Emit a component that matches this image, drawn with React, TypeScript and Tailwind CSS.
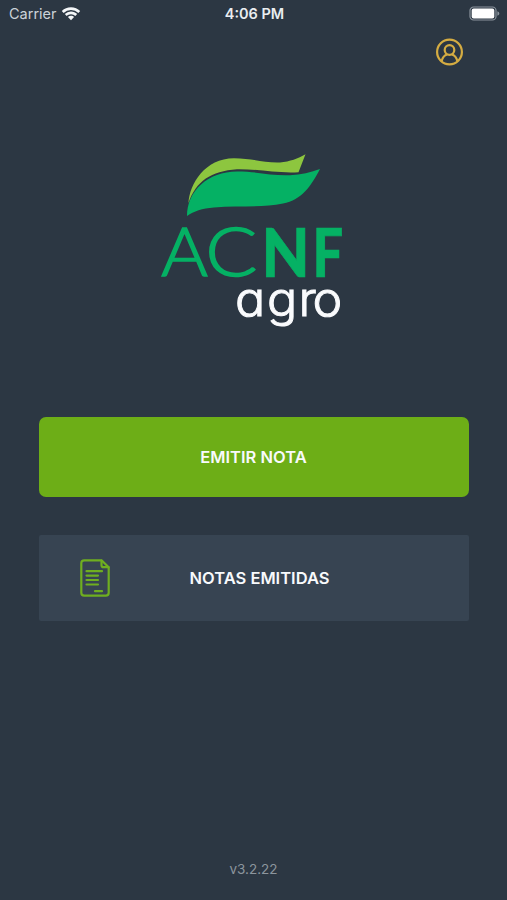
import type { ReactNode } from "react";

function WifiIcon() {
  return (
    <svg width="20" height="14" viewBox="0 0 20 14" className="ml-1 -mt-px" fill="#f4f6f8">
      <path d="M10 0.3c3.6 0 6.8 1.4 9.2 3.7l-1.8 1.9A10.6 10.6 0 0 0 10 2.9 10.6 10.6 0 0 0 2.6 5.9L0.8 4A13.2 13.2 0 0 1 10 0.3z" />
      <path d="M10 4.600c2.400 0 4.600.9 6.200 2.500l-1.900 1.900A6.200 6.200 0 0 0 10 7.200c-1.700 0-3.200.7-4.300 1.800L3.800 7.100A8.800 8.800 0 0 1 10 4.600z" />
      <path d="M10 8.800c1.200 0 2.300.5 3.100 1.300L10 13.300 6.900 10.100A4.400 4.400 0 0 1 10 8.800z" />
    </svg>
  );
}

function BatteryIcon() {
  return (
    <svg width="32" height="16" viewBox="0 0 32 16" className="-mt-px" fill="none">
      <rect x="2" y="1" width="26" height="13" rx="3.6" stroke="#8b949d" strokeWidth="1.2" />
      <rect x="3.700" y="2.600" width="22.600" height="9.800" rx="2" fill="#ffffff" />
      <path d="M29.400 5.200c1.400.5 1.900 1.400 1.900 2.300s-.5 1.800-1.900 2.300z" fill="#8b949d" />
    </svg>
  );
}

function ProfileIcon() {
  return (
    <svg width="28" height="28" viewBox="0 0 28 28" fill="none" stroke="#d5ac42" strokeWidth="2.200">
      <circle cx="13.500" cy="14" r="12.400" />
      <circle cx="13.500" cy="12" r="4.800" />
      <path d="M5.700 23c.7-3.500 2.600-5.600 5.400-6.500M21.300 23c-.7-3.500-2.600-5.600-5.400-6.500" />
    </svg>
  );
}

function NoteIcon() {
  return (
    <svg
      width="30"
      height="38"
      viewBox="0 0 30 38"
      fill="none"
      stroke="#6fae20"
      strokeWidth="2.200"
      strokeLinecap="round"
      strokeLinejoin="round"
    >
      <path d="M21.500 1.300H4.200A2.900 2.900 0 0 0 1.300 4.200v29.600a2.900 2.900 0 0 0 2.900 2.900h21.600a2.900 2.900 0 0 0 2.900-2.900V8.300z" />
      <path d="M21.500 1.500v4.700a2 2 0 0 0 2 2h5" />
      <path d="M6.500 12.200h15.500M6.500 16.600h11.500M6.500 21h11.500M6.500 25.500h11.500M15 32.200h7" />
    </svg>
  );
}

function Logo() {
  return (
    <svg width="200" height="190" viewBox="150 145 200 190">
      <path
        d="M188.500 203C189.500 184 205 158.200 234 158.200C252 158.200 264 163 280 162.400C290 161.500 298 158.500 305.500 154.200L298.500 172.200C277 173.500 258 168.800 237 169.200C211 171 196 181 188.500 203Z"
        fill="#8dc63f"
      />
      <path
        d="M187 216C187 191 208 171.500 237 171.500C259 171.500 272 176 290 175.200C301 174.500 311 172.500 320 169C311 186 302 200 283 203.500C262 208 238 205.500 214 207.500C202 208.500 194 211 187 216Z"
        fill="#05b164"
      />
      <g fill="#05b164" fontSize="67" fontFamily="Lato, sans-serif">
        <text transform="translate(161.200 276) scale(1.060 1)" fontWeight="300" stroke="#05b164" strokeWidth="1.600">
          A
        </text>
        <text transform="translate(205.500 276) scale(1.140 1)" fontWeight="300" stroke="#05b164" strokeWidth="1.600">
          C
        </text>
        <text transform="translate(261.500 276.500) scale(0.930 1)" fontWeight="900" stroke="#05b164" strokeWidth="0.600">
          N
        </text>
        <text transform="translate(312.500 276.500) scale(0.810 1)" fontWeight="900" stroke="#05b164" strokeWidth="0.600">
          F
        </text>
      </g>
      <text
        transform="translate(235 315.500) scale(1.070 1)"
        x="0 30 59.300 72.500"
        fill="#fafbfd"
        stroke="#fafbfd"
        strokeWidth="0.900"
        fontSize="47"
        fontWeight="300"
        fontFamily="Inter, sans-serif"
        style={{ fontFeatureSettings: '"cv11"' }}
      >
        agro
      </text>
    </svg>
  );
}

function MenuButton({ className, icon, children }: { className: string; icon?: ReactNode; children: ReactNode }) {
  return (
    <button className={`flex w-full items-center text-[16.500px] font-semibold text-[#f8fafc] ${className}`}>
      {icon}
      <span className="flex-1">{children}</span>
    </button>
  );
}

export default function App() {
  return (
    <div className="flex h-[900px] w-[507px] flex-col overflow-hidden bg-[#2c3743] font-['Inter',sans-serif]">
      <header className="grid h-7 grid-cols-3 items-center pl-[9px] pr-[7px] text-[14.500px] leading-none text-[#e9edf0]">
        <div className="flex items-center">
          <span className="text-[#cbd2d8]">Carrier</span>
          <WifiIcon />
        </div>
        <span className="text-center font-semibold">4:06 PM</span>
        <div className="flex justify-end">
          <BatteryIcon />
        </div>
      </header>

      <div className="mt-[10px] flex justify-end pr-[43px]">
        <button aria-label="Perfil">
          <ProfileIcon />
        </button>
      </div>

      <main className="flex flex-col items-center pl-[39px] pr-[38px] pt-[79px]">
        <div className="w-full pl-[111px]">
          <Logo />
        </div>
        <div className="mt-[82px] flex w-full flex-col gap-[38px]">
          <MenuButton className="h-20 rounded-[7px] bg-[#6dae17] pr-px">EMITIR NOTA</MenuButton>
          <MenuButton className="h-[86px] rounded-[2px] bg-[#374452] pl-[41px] pr-[60px]" icon={<NoteIcon />}>
            NOTAS EMITIDAS
          </MenuButton>
        </div>
      </main>

      <footer className="mt-auto pb-[21px] text-center text-[13.500px] leading-[20px] text-[#8c959d]">v3.2.22</footer>
    </div>
  );
}
